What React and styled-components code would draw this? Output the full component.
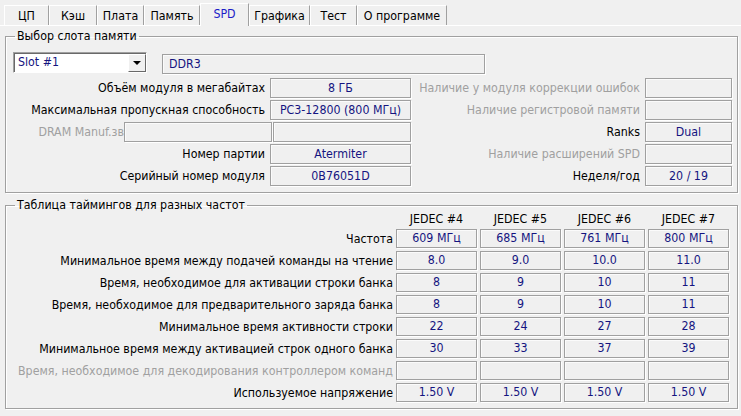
import React from "react";
import styled, { createGlobalStyle } from "styled-components";

const GlobalStyle = createGlobalStyle`
    html, body {
        margin: 0;
        padding: 0;
        background: #f0f0f0;
    }
    body {
        font-family: "DejaVu Sans Condensed", "Liberation Sans", Arial, sans-serif;
        font-size: 12.3px;
        color: #000;
    }
`;

const tabs = [
    { name: "ЦП", width: 45 },
    { name: "Кэш", width: 48 },
    { name: "Плата", width: 47 },
    { name: "Память", width: 56 },
    { name: "SPD", width: 49, active: true },
    { name: "Графика", width: 61 },
    { name: "Тест", width: 47 },
    { name: "О программе", width: 90 },
];

const infoRows = [
    {
        label: "Объём модуля в мегабайтах",
        value: "8 ГБ",
        rightLabel: "Наличие у модуля коррекции ошибок",
        rightValue: "",
        rightMuted: true,
    },
    {
        label: "Максимальная пропускная способность",
        value: "PC3-12800 (800 МГц)",
        rightLabel: "Наличие регистровой памяти",
        rightValue: "",
        rightMuted: true,
    },
    {
        label: "DRAM Manuf.зв",
        split: true,
        rightLabel: "Ranks",
        rightValue: "Dual",
    },
    {
        label: "Номер партии",
        value: "Atermiter",
        rightLabel: "Наличие расширений SPD",
        rightValue: "",
        rightMuted: true,
    },
    {
        label: "Серийный номер модуля",
        value: "0B76051D",
        rightLabel: "Неделя/год",
        rightValue: "20 / 19",
    },
];

const columns = ["JEDEC #4", "JEDEC #5", "JEDEC #6", "JEDEC #7"];

const timings = [
    { label: "Частота", values: ["609 МГц", "685 МГц", "761 МГц", "800 МГц"] },
    { label: "Минимальное время между подачей команды на чтение", values: ["8.0", "9.0", "10.0", "11.0"] },
    { label: "Время, необходимое для активации строки банка", values: ["8", "9", "10", "11"] },
    { label: "Время, необходимое для предварительного заряда банка", values: ["8", "9", "10", "11"] },
    { label: "Минимальное время активности строки", values: ["22", "24", "27", "28"] },
    { label: "Минимальное время между активацией строк одного банка", values: ["30", "33", "37", "39"] },
    { label: "Время, необходимое для декодирования контроллером команд", values: ["", "", "", ""], muted: true },
    { label: "Используемое напряжение", values: ["1.50 V", "1.50 V", "1.50 V", "1.50 V"] },
];

function App() {
    const renderTabs = () => {
        return tabs.map((tab) => {
            return (
                <Tab key={tab.name} $width={tab.width} $active={tab.active}>
                    {tab.name}
                </Tab>
            );
        });
    };

    const renderInfoRows = () => {
        return infoRows.map((row) => {
            return (
                <InfoRow key={row.rightLabel}>
                    {row.split ? (
                        <>
                            <Label $width={111} $muted $gap={0}>
                                {row.label}
                            </Label>
                            <ValueBox $width={148} />
                            <ValueBox $width={138} style={{ marginLeft: 1 }} />
                        </>
                    ) : (
                        <>
                            <Label $width={252} $gap={5}>
                                {row.label}
                            </Label>
                            <ValueBox $width={141}>{row.value}</ValueBox>
                        </>
                    )}
                    <RightLabel $muted={row.rightMuted}>{row.rightLabel}</RightLabel>
                    <ValueBox $width={87}>{row.rightValue}</ValueBox>
                </InfoRow>
            );
        });
    };

    const renderTimings = () => {
        return timings.map((row) => {
            return (
                <React.Fragment key={row.label}>
                    <TimingLabel $muted={row.muted}>{row.label}</TimingLabel>
                    {row.values.map((value, index) => (
                        <Cell key={index}>{value}</Cell>
                    ))}
                </React.Fragment>
            );
        });
    };

    return (
        <Page>
            <GlobalStyle />
            <TabBar>{renderTabs()}</TabBar>
            <Content>
                <Group $bottom={6}>
                    <Legend>Выбор слота памяти</Legend>
                    <TopRow>
                        <Combo>
                            <ComboText>Slot #1</ComboText>
                            <ComboButton>
                                <svg width="8" height="4" viewBox="0 0 8 4">
                                    <polygon points="0,0 8,0 4,4" fill="#000" />
                                </svg>
                            </ComboButton>
                        </Combo>
                        <TypeBox>DDR3</TypeBox>
                    </TopRow>
                    <InfoRows>{renderInfoRows()}</InfoRows>
                </Group>
                <Group $bottom={6} $right={8} $gapTop={4}>
                    <Legend>Таблица таймингов для разных частот</Legend>
                    <TimingGrid>
                        <span />
                        {columns.map((column) => (
                            <ColumnHead key={column}>{column}</ColumnHead>
                        ))}
                        {renderTimings()}
                    </TimingGrid>
                </Group>
            </Content>
        </Page>
    );
}

const Page = styled.div`
    width: 741px;
    height: 416px;
    overflow: hidden;
    background: #f0f0f0;
`;
const TabBar = styled.div`
    display: flex;
    align-items: flex-end;
    box-sizing: border-box;
    height: 26px;
    padding-left: 4px;
    border-bottom: 1px solid #fff;
`;
const Tab = styled.div`
    display: flex;
    align-items: center;
    justify-content: center;
    box-sizing: border-box;
    width: ${(p) => p.$width}px;
    height: ${(p) => (p.$active ? 23 : 20)}px;
    margin-bottom: ${(p) => (p.$active ? -1 : 0)}px;
    padding-bottom: ${(p) => (p.$active ? 3 : 0)}px;
    border-top: 1px solid #fff;
    border-left: 1px solid #fff;
    border-right: 1px solid #a0a0a0;
    background: #f0f0f0;
    color: ${(p) => (p.$active ? "#1c1cc8" : "#000")};
    white-space: nowrap;
`;
const Content = styled.div`
    padding: 2px 3px 0 5px;
`;
const Group = styled.fieldset`
    margin: ${(p) => p.$gapTop || 0}px 0 0 0;
    padding: ${(p) => (p.$gapTop ? 0 : 8)}px ${(p) => p.$right || 5}px ${(p) => p.$bottom}px 7px;
    min-width: 0;
    border: 1px solid #a0a0a0;
    box-shadow: inset 1px 1px 0 #fff, 1px 1px 0 #fff;
`;
const Legend = styled.legend`
    margin-left: 2px;
    padding: 0 2px;
    line-height: 16px;
    color: #000;
`;
const TopRow = styled.div`
    display: flex;
    align-items: center;
    height: 21px;
`;
const Combo = styled.div`
    display: flex;
    box-sizing: border-box;
    width: 134px;
    height: 21px;
    background: #fff;
    border: 1px solid;
    border-color: #a0a0a0 #fff #fff #a0a0a0;
    box-shadow: inset 1px 1px 0 #696969;
`;
const ComboText = styled.div`
    flex: 1;
    padding: 1px 0 0 4px;
    line-height: 17px;
    color: #141480;
`;
const ComboButton = styled.div`
    display: flex;
    align-items: center;
    justify-content: center;
    box-sizing: border-box;
    width: 18px;
    margin: 1px 0 0 0;
    background: #f0f0f0;
    border: 1px solid;
    border-color: #fff #696969 #696969 #fff;
`;
const ValueBox = styled.div`
    box-sizing: border-box;
    width: ${(p) => p.$width}px;
    height: 20px;
    flex-shrink: 0;
    border: 1px solid #a0a0a0;
    box-shadow: inset 1px 1px 0 #fbfbfb, 1px 1px 0 #fff;
    text-align: center;
    line-height: 18px;
    color: #141480;
    white-space: nowrap;
`;
const TypeBox = styled(ValueBox)`
    width: 323px;
    margin: 2px 0 0 15px;
    padding-left: 6px;
    text-align: left;
`;
const InfoRows = styled.div`
    display: flex;
    flex-direction: column;
    gap: 2px;
    margin-top: 5px;
`;
const InfoRow = styled.div`
    display: flex;
    align-items: center;
    height: 20px;
`;
const Label = styled.div`
    flex-shrink: 0;
    width: ${(p) => p.$width}px;
    margin-right: ${(p) => p.$gap}px;
    text-align: right;
    white-space: nowrap;
    color: ${(p) => (p.$muted ? "#a0a0a0" : "#000")};
`;
const RightLabel = styled.div`
    flex: 1;
    margin-right: 5px;
    text-align: right;
    white-space: nowrap;
    color: ${(p) => (p.$muted ? "#a0a0a0" : "#000")};
`;
const TimingGrid = styled.div`
    display: grid;
    grid-template-columns: 380px repeat(4, 81px);
    grid-template-rows: 13px repeat(8, 19px);
    column-gap: 3px;
    row-gap: 3px;
    align-items: center;
`;
const ColumnHead = styled.div`
    text-align: center;
    line-height: 13px;
    color: #000;
`;
const TimingLabel = styled.div`
    text-align: right;
    white-space: nowrap;
    color: ${(p) => (p.$muted ? "#a0a0a0" : "#000")};
`;
const Cell = styled.div`
    box-sizing: border-box;
    height: 19px;
    border: 1px solid #a0a0a0;
    box-shadow: inset 1px 1px 0 #fbfbfb, 1px 1px 0 #fff;
    text-align: center;
    line-height: 17px;
    color: #141480;
`;

export default App;
